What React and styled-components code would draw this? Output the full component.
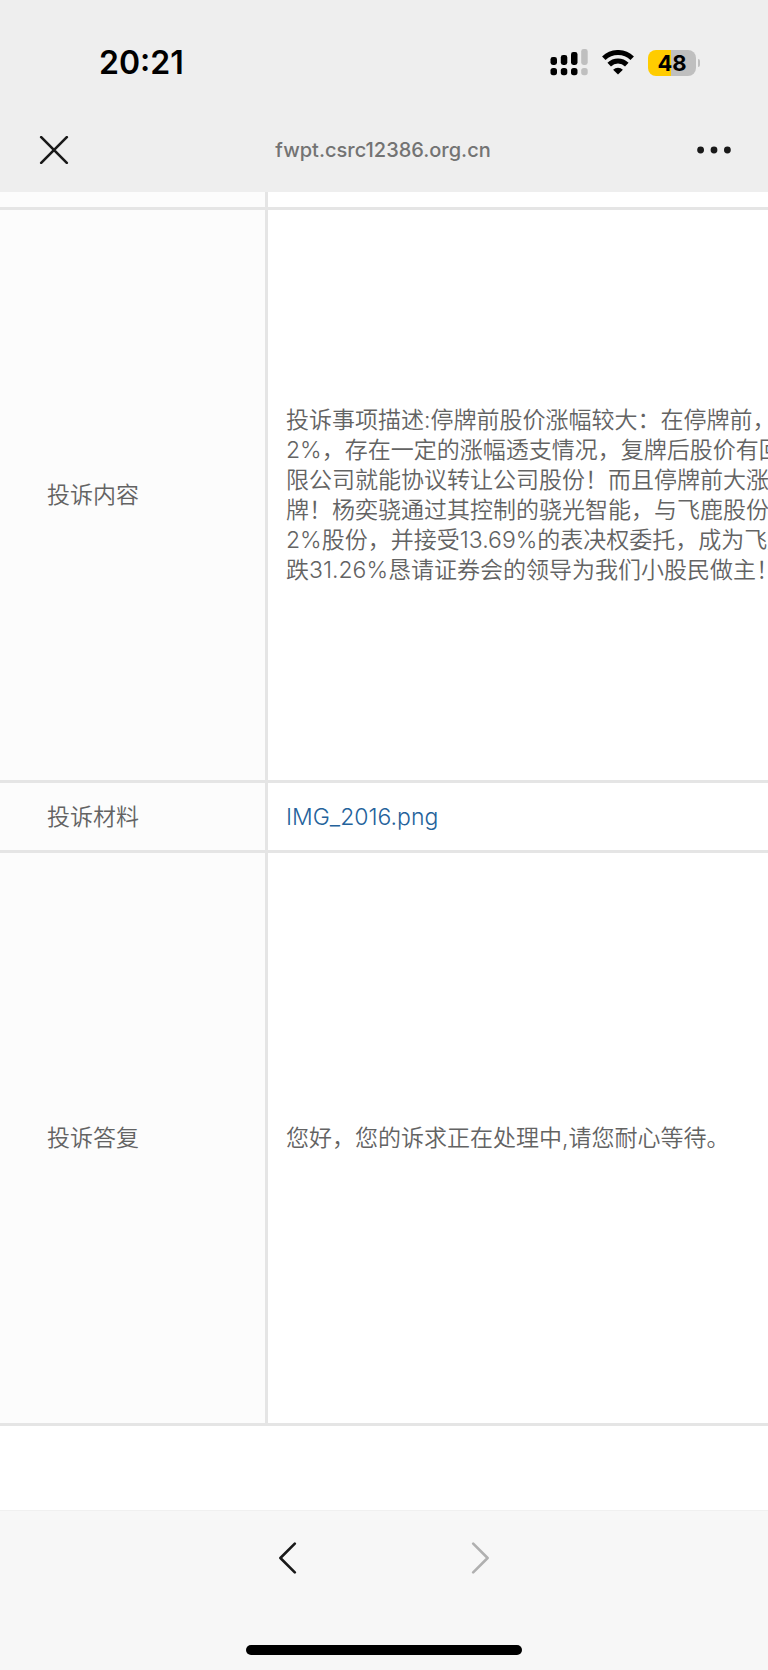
import React from "react";
import styled, { createGlobalStyle } from "styled-components";

const content = [
  "投诉事项描述:停牌前股价涨幅较大：在停牌前，",
  "2%，存在一定的涨幅透支情况，复牌后股价有回",
  "限公司就能协议转让公司股份！而且停牌前大涨",
  "牌！杨奕骁通过其控制的骁光智能，与飞鹿股份",
  "2%股份，并接受13.69%的表决权委托，成为飞鹿",
  "跌31.26%恳请证券会的领导为我们小股民做主！",
];

const SignalIcon = () => (
  <svg width="38" height="28" viewBox="0 0 38 28" aria-hidden="true">
    <rect x="0.5" y="8" width="6.5" height="8" rx="2.4" />
    <rect x="10.8" y="6" width="6.5" height="10" rx="2.4" />
    <rect x="21" y="3" width="6.5" height="13" rx="2.4" />
    <rect x="31.2" y="0" width="6.5" height="16" rx="2.4" fill="#bfbfbf" />
    <rect x="0.5" y="19" width="6.5" height="7.2" rx="2.6" />
    <rect x="10.8" y="19" width="6.5" height="7.2" rx="2.6" />
    <rect x="21" y="19" width="6.5" height="7.2" rx="2.6" />
    <rect x="31.2" y="19" width="6.5" height="7.2" rx="2.6" fill="#bfbfbf" />
  </svg>
);

const WifiIcon = () => (
  <svg width="32" height="26" viewBox="0 0 32 26" aria-hidden="true">
    <path
      d="M1.8 8.2a20.5 20.5 0 0 1 28.4 0M7.2 14.6a12.5 12.5 0 0 1 17.6 0"
      fill="none"
      stroke="#000"
      strokeWidth="5"
    />
    <path d="M16 24.6l-4.9-4.8a7 7 0 0 1 9.8 0z" />
  </svg>
);

const App = () => {
  return (
    <Page>
      <GlobalStyle />
      <Header>
        <StatusBar>
          <Time>20:21</Time>
          <Indicators>
            <SignalIcon />
            <WifiIcon />
            <Battery>
              <BatteryBody>48</BatteryBody>
              <BatteryTip />
            </Battery>
          </Indicators>
        </StatusBar>
        <NavBar>
          <IconButton type="button" aria-label="关闭">
            <svg width="30" height="28" viewBox="0 0 30 28">
              <path d="M2.2 1.2l25.6 25.6M27.8 1.2L2.2 26.8" />
            </svg>
          </IconButton>
          <Title>fwpt.csrc12386.org.cn</Title>
          <IconButton type="button" aria-label="更多">
            <svg width="34" height="8" viewBox="0 0 34 8">
              <g fill="#191919" stroke="none">
                <circle cx="3.6" cy="4" r="3.4" />
                <circle cx="17" cy="4" r="3.4" />
                <circle cx="30.4" cy="4" r="3.4" />
              </g>
            </svg>
          </IconButton>
        </NavBar>
      </Header>
      <Main>
        <Table>
          <tbody>
            <Row $height={18}>
              <th />
              <td />
            </Row>
            <Row $height={573}>
              <th scope="row">投诉内容</th>
              <td>
                {content.map((line) => (
                  <Line key={line}>{line}</Line>
                ))}
              </td>
            </Row>
            <Row $height={70}>
              <th scope="row">投诉材料</th>
              <td>
                <a href="#file">IMG_2016.png</a>
              </td>
            </Row>
            <Row $height={573}>
              <th scope="row">投诉答复</th>
              <td>您好，您的诉求正在处理中,请您耐心等待。</td>
            </Row>
          </tbody>
        </Table>
      </Main>
      <Footer>
        <Pager>
          <IconButton type="button" aria-label="后退">
            <svg width="18" height="32" viewBox="0 0 18 32">
              <path d="M15.8 1.6L1.4 16l14.4 14.4" />
            </svg>
          </IconButton>
          <IconButton type="button" aria-label="前进" disabled>
            <svg width="18" height="32" viewBox="0 0 18 32">
              <path d="M2.2 1.6L16.6 16L2.2 30.4" />
            </svg>
          </IconButton>
        </Pager>
        <HomeBar />
      </Footer>
    </Page>
  );
};

const GlobalStyle = createGlobalStyle`
  * {
    box-sizing: border-box;
  }
  body {
    margin: 0;
    background-color: white;
    font-family: Inter, "Noto Sans CJK SC", sans-serif;
  }
`;

const Page = styled.div`
  display: flex;
  flex-direction: column;
  min-height: 100vh;
  overflow: hidden;
`;

const Header = styled.header`
  background-color: #eeeeee;
`;

const StatusBar = styled.div`
  display: flex;
  align-items: center;
  justify-content: space-between;
  height: 108px;
  padding: 17px 68px 0 99px;
`;

const Time = styled.span`
  font-size: 32px;
  font-weight: 600;
  line-height: 40px;
`;

const Indicators = styled.div`
  display: flex;
  align-items: center;
  gap: 14px;
`;

const Battery = styled.div`
  display: flex;
  align-items: center;
  gap: 2px;
`;

const BatteryBody = styled.div`
  width: 48px;
  height: 26px;
  border-radius: 8px;
  background: linear-gradient(to right, #ffcc00 48%, #bfbfbf 48%);
  font-size: 22px;
  font-weight: 700;
  line-height: 26px;
  text-align: center;
`;

const BatteryTip = styled.div`
  width: 2px;
  height: 8px;
  border-radius: 0 2px 2px 0;
  background-color: #bfbfbf;
`;

const NavBar = styled.div`
  display: flex;
  align-items: center;
  justify-content: space-between;
  height: 84px;
  padding: 0 37px 0 39px;
`;

const Title = styled.h1`
  margin: 0;
  color: #737373;
  font-size: 20px;
  font-weight: 500;
  line-height: 24px;
`;

const IconButton = styled.button`
  display: flex;
  padding: 0;
  border: none;
  background: none;
  cursor: pointer;
  svg {
    fill: none;
    stroke: #191919;
    stroke-width: 2.6;
    stroke-linecap: round;
    stroke-linejoin: round;
  }
  &:disabled svg {
    stroke: #b0b0b0;
  }
`;

const Main = styled.main`
  flex: 1;
`;

const Table = styled.table`
  width: 100%;
  table-layout: fixed;
  border-spacing: 0;
  color: #636363;
  font-size: 23px;
  font-weight: 350;
  line-height: 30px;
`;

const Row = styled.tr`
  height: ${(props) => props.$height}px;
  th,
  td {
    padding: 0;
    border-bottom: 3px solid #e5e5e5;
    text-align: left;
    white-space: nowrap;
    overflow: hidden;
  }
  th {
    width: 268px;
    padding-left: 47px;
    border-right: 3px solid #e5e5e5;
    background-color: #fcfcfc;
    font-weight: 350;
  }
  td {
    padding-left: 18px;
  }
  a {
    color: #24629b;
    text-decoration: none;
  }
`;

const Line = styled.div``;

const Footer = styled.footer`
  height: 160px;
  border-top: 1px solid #f0f0f0;
  background-color: #f7f7f7;
`;

const Pager = styled.nav`
  display: flex;
  justify-content: center;
  gap: 174px;
  padding-top: 31px;
`;

const HomeBar = styled.div`
  width: 36%;
  height: 10px;
  margin: 71px auto 0;
  border-radius: 5px;
  background-color: black;
`;

export default App;
